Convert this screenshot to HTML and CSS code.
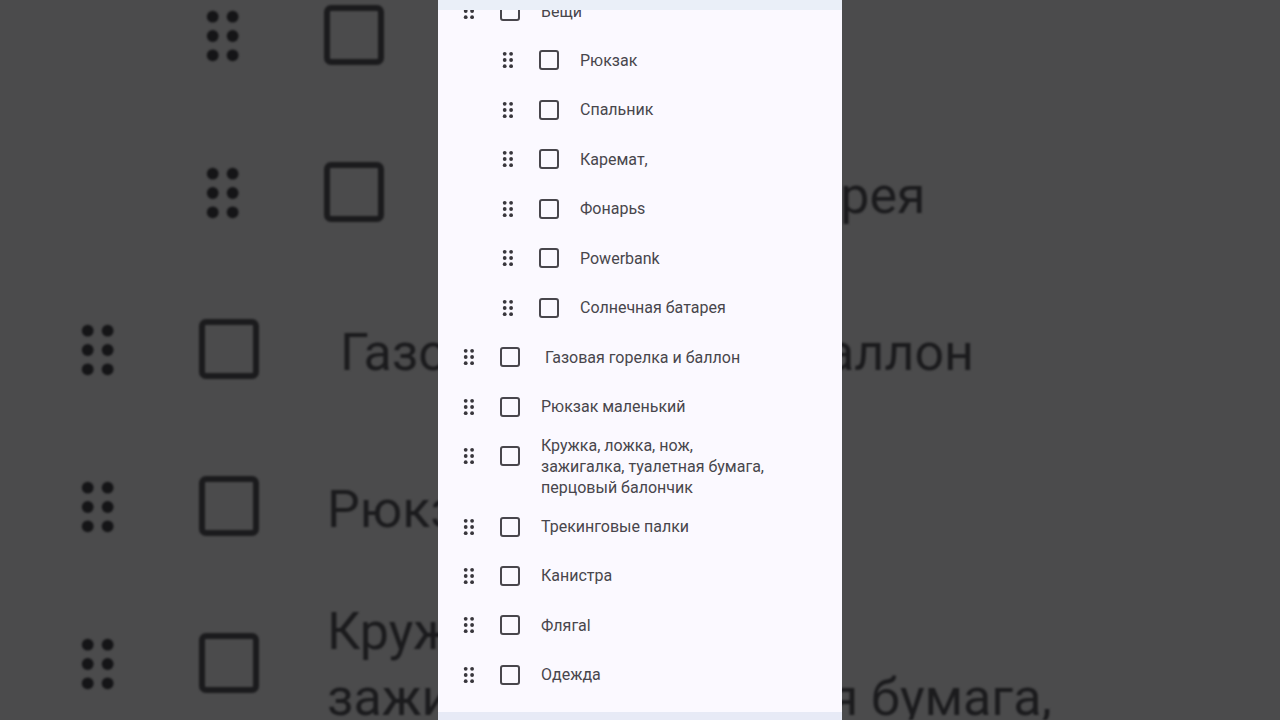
FILE: index.html
```
<!DOCTYPE html>
<html lang="ru">
<head>
  <meta charset="UTF-8" />
  <meta name="viewport" content="width=device-width, initial-scale=1.0"/>
  <title>Список вещей</title>
  <link rel="stylesheet" href="styles.css">
</head>
<body>

  <!-- Drag handle icon, shared by all rows -->
  <svg class="icons" aria-hidden="true">
    <symbol id="handle" viewBox="0 0 12 18">
      <circle cx="2.7" cy="2.8" r="1.9"/><circle cx="9.1" cy="2.8" r="1.9"/>
      <circle cx="2.7" cy="9" r="1.9"/><circle cx="9.1" cy="9" r="1.9"/>
      <circle cx="2.7" cy="15.2" r="1.9"/><circle cx="9.1" cy="15.2" r="1.9"/>
    </symbol>
  </svg>

  <div class="stage">
    <!-- Enlarged dark list behind the phone screen -->
    <div class="backdrop" aria-hidden="true">
      <ul class="list list-big">
        <li class="item sub"><svg class="handle"><use href="#handle"/></svg><label><input type="checkbox" tabindex="-1"><span>Powerbank</span></label></li>
        <li class="item sub"><svg class="handle"><use href="#handle"/></svg><label><input type="checkbox" tabindex="-1"><span>Солнечная батарея</span></label></li>
        <li class="item"><svg class="handle"><use href="#handle"/></svg><label><input type="checkbox" tabindex="-1"><span>&nbsp;Газовая горелка и баллон</span></label></li>
        <li class="item"><svg class="handle"><use href="#handle"/></svg><label><input type="checkbox" tabindex="-1"><span>Рюкзак маленький</span></label></li>
        <li class="item"><svg class="handle"><use href="#handle"/></svg><label><input type="checkbox" tabindex="-1"><span>Кружка, ложка, нож,<br>зажигалка, туалетная бумага,<br>перцовый балончик</span></label></li>
      </ul>
    </div>

    <!-- Phone screen -->
    <div class="phone">
      <main class="content">
        <ul class="list">
          <li class="item"><svg class="handle"><use href="#handle"/></svg><label><input type="checkbox"><span>Вещи</span></label></li>
          <li class="item sub"><svg class="handle"><use href="#handle"/></svg><label><input type="checkbox"><span>Рюкзак</span></label></li>
          <li class="item sub"><svg class="handle"><use href="#handle"/></svg><label><input type="checkbox"><span>Спальник</span></label></li>
          <li class="item sub"><svg class="handle"><use href="#handle"/></svg><label><input type="checkbox"><span>Каремат,</span></label></li>
          <li class="item sub"><svg class="handle"><use href="#handle"/></svg><label><input type="checkbox"><span>Фонарьs</span></label></li>
          <li class="item sub"><svg class="handle"><use href="#handle"/></svg><label><input type="checkbox"><span>Powerbank</span></label></li>
          <li class="item sub"><svg class="handle"><use href="#handle"/></svg><label><input type="checkbox"><span>Солнечная батарея</span></label></li>
          <li class="item"><svg class="handle"><use href="#handle"/></svg><label><input type="checkbox"><span>&nbsp;Газовая горелка и баллон</span></label></li>
          <li class="item"><svg class="handle"><use href="#handle"/></svg><label><input type="checkbox"><span>Рюкзак маленький</span></label></li>
          <li class="item"><svg class="handle"><use href="#handle"/></svg><label><input type="checkbox"><span>Кружка, ложка, нож,<br>зажигалка, туалетная бумага,<br>перцовый балончик</span></label></li>
          <li class="item"><svg class="handle"><use href="#handle"/></svg><label><input type="checkbox"><span>Трекинговые палки</span></label></li>
          <li class="item"><svg class="handle"><use href="#handle"/></svg><label><input type="checkbox"><span>Канистра</span></label></li>
          <li class="item"><svg class="handle"><use href="#handle"/></svg><label><input type="checkbox"><span>Флягаl</span></label></li>
          <li class="item"><svg class="handle"><use href="#handle"/></svg><label><input type="checkbox"><span>Одежда</span></label></li>
        </ul>
      </main>
    </div>
  </div>

</body>
</html>
```

FILE: styles.css
```
* {
  box-sizing: border-box;
}

body {
  margin: 0;
  background: #4b4b4c;
  font-family: Roboto, "Noto Sans", sans-serif;
}

.icons {
  display: none;
}

.stage {
  display: grid;
  grid-template-columns: 1fr minmax(0, 404px) 1fr;
  grid-template-rows: 100vh;
  overflow: hidden;
}

.backdrop {
  grid-area: 1 / 1 / 2 / 4;
  overflow: hidden;
  filter: blur(1px);
}

.phone {
  grid-area: 1 / 2 / 2 / 3;
  z-index: 1;
  display: flex;
  flex-direction: column;
  background: #fbf9ff;
  border-top: 10px solid #eaeff8;
  border-bottom: 8px solid #e7eaf6;
}

.content {
  flex: 1;
  min-height: 0;
  display: flex;
  flex-direction: column;
  overflow: hidden;
}

.list {
  --ink: #48464c;
  --dots: #38363c;
  --box: 20px;
  --line: 2px;
  --gap: 21px;
  --left: 25px;
  --indent: 39px;
  --row: 49px;
  --top: 15px;
  flex: 1;
  display: flex;
  flex-direction: column;
  justify-content: space-between;
  margin: -24px 0 13px;
  padding: 0;
  list-style: none;
  color: var(--ink);
  font-size: 16px;
  line-height: 21px;
}

.item {
  display: flex;
  align-items: flex-start;
  gap: 25px;
  padding-left: var(--left);
  min-height: var(--row);
}

.sub {
  padding-left: calc(var(--left) + var(--indent));
}

.handle {
  flex: none;
  width: 12px;
  height: 18px;
  margin-top: 16px;
  fill: var(--dots);
}

.item label {
  display: flex;
  align-items: flex-start;
  gap: var(--gap);
  min-height: var(--row);
}

.item input {
  appearance: none;
  flex: none;
  width: var(--box);
  height: var(--box);
  margin: var(--top) 0 0;
  border: var(--line) solid var(--ink);
  border-radius: calc(var(--line) + 1px);
}

.item input:checked {
  background: var(--ink);
}

.item span {
  align-self: center;
  padding: 4px 0 3px;
}

/* Big version for the backdrop */
.list-big {
  --ink: #1b1b1d;
  --dots: #151517;
  --box: 60px;
  --line: 6px;
  --gap: 68px;
  --left: 79px;
  --indent: 125px;
  --row: 157px;
  --top: 48px;
  margin: -43px 0 0;
  font-size: 52px;
  line-height: 66px;
  white-space: nowrap;
}

.list-big .item {
  gap: 82px;
}

.list-big .handle {
  width: 38px;
  height: 56px;
  margin-top: 51px;
}

.list-big .item span {
  padding: 14px 0 8px;
}
```
